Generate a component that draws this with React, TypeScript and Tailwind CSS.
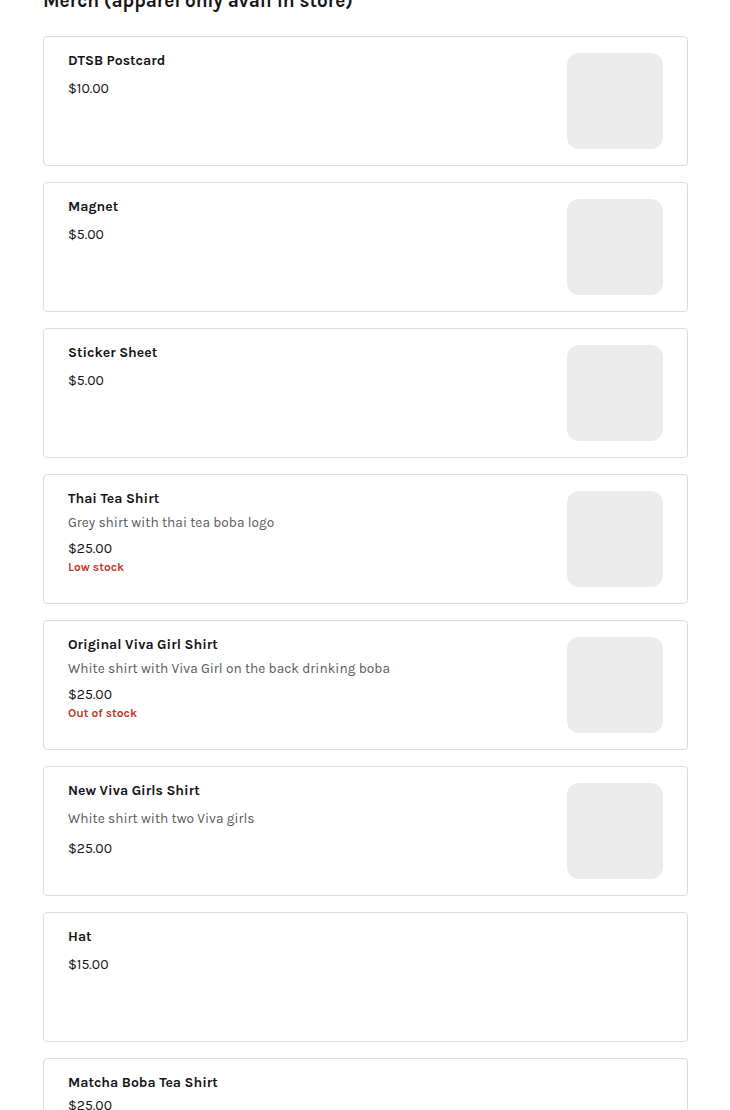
type Item = {
  name: string;
  description?: string;
  price: string;
  stock?: string;
  image: boolean;
  descGap?: string;
  priceGap: string;
};

const items: Item[] = [
  { name: "DTSB Postcard", price: "$10.00", image: true, priceGap: "mt-2" },
  { name: "Magnet", price: "$5.00", image: true, priceGap: "mt-2" },
  { name: "Sticker Sheet", price: "$5.00", image: true, priceGap: "mt-2" },
  {
    name: "Thai Tea Shirt",
    description: "Grey shirt with thai tea boba logo",
    price: "$25.00",
    stock: "Low stock",
    image: true,
    descGap: "mt-[3px]",
    priceGap: "mt-[7px]",
  },
  {
    name: "Original Viva Girl Shirt",
    description: "White shirt with Viva Girl on the back drinking boba",
    price: "$25.00",
    stock: "Out of stock",
    image: true,
    descGap: "mt-[3px]",
    priceGap: "mt-[7px]",
  },
  {
    name: "New Viva Girls Shirt",
    description: "White shirt with two Viva girls",
    price: "$25.00",
    image: true,
    descGap: "mt-[7px]",
    priceGap: "mt-[11px]",
  },
  { name: "Hat", price: "$15.00", image: false, priceGap: "mt-2" },
  { name: "Matcha Boba Tea Shirt", price: "$25.00", image: false, priceGap: "mt-[3px]" },
];

function MerchCard({ item }: { item: Item }) {
  return (
    <div className="flex min-h-[130px] rounded border border-[#dcdcdc] bg-white px-6 py-4">
      <div className="-mt-[2px] flex flex-1 flex-col">
        <div className="text-[14px] leading-5 font-bold text-[#141414]">{item.name}</div>
        {item.description && (
          <div className={`${item.descGap} text-[13.7px] leading-5 text-[#5a5a5a]`}>{item.description}</div>
        )}
        <div className={`${item.priceGap} text-[14px] leading-5 text-[#141414]`}>{item.price}</div>
        {item.stock && (
          <div className="text-[12px] leading-4 font-bold text-[#c0392b]">{item.stock}</div>
        )}
      </div>
      {item.image && <div className="size-24 shrink-0 rounded-xl bg-[#ebebeb]" />}
    </div>
  );
}

export default function App() {
  return (
    <div className="h-[1110px] overflow-hidden bg-white pl-[43px] pr-[42px] font-['Karla','Lato','Liberation_Sans',sans-serif]">
      <h2 className="-mt-[13px] text-[19px] leading-7 font-bold text-[#141414]">
        Merch (apparel only avail in store)
      </h2>
      <div className="mt-[21px] flex flex-col gap-4">
        {items.map((item) => (
          <MerchCard key={item.name} item={item} />
        ))}
      </div>
    </div>
  );
}
